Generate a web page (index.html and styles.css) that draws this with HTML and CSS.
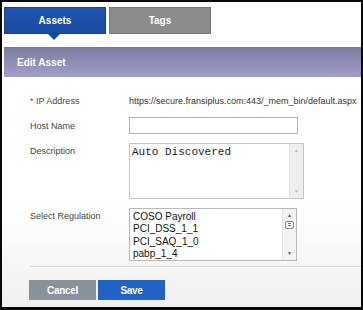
FILE: index.html
```html
<!DOCTYPE html>
<html lang="en">
<head>
    <meta charset="UTF-8">
    <meta name="viewport" content="width=device-width, initial-scale=1.0">
    <title>Edit Asset</title>
    <link rel="stylesheet" href="styles.css">
</head>
<body>
    <div class="frame">
        <div class="tabs">
            <div class="tab tab-active">Assets</div>
            <div class="tab">Tags</div>
        </div>

        <div class="panel-head">Edit Asset</div>

        <div class="panel-body">
            <div class="form">
                <div class="row row-ip">
                    <div class="label"><span class="req">*</span> IP Address</div>
                    <div class="value">https://secure.fransiplus.com:443/_mem_bin/default.aspx</div>
                </div>

                <div class="row row-host">
                    <label class="label" for="hostName">Host Name</label>
                    <input type="text" id="hostName" class="text-input">
                </div>

                <div class="row row-desc">
                    <div class="label">Description</div>
                    <div class="box box-desc">
                        <div class="box-text mono">Auto Discovered</div>
                        <div class="gutter">
                            <span class="arrow">&#9650;</span>
                            <span class="arrow">&#9660;</span>
                        </div>
                    </div>
                </div>

                <div class="row row-reg">
                    <div class="label">Select Regulation</div>
                    <div class="box box-list">
                        <div class="box-text list">
                            <div>COSO Payroll</div>
                            <div>PCI_DSS_1_1</div>
                            <div>PCI_SAQ_1_0</div>
                            <div>pabp_1_4</div>
                        </div>
                        <div class="gutter gutter-list">
                            <span class="arrow dark">&#9650;</span>
                            <span class="thumb"></span>
                            <span class="spacer"></span>
                            <span class="arrow dark">&#9660;</span>
                        </div>
                    </div>
                </div>
            </div>

            <div class="divider"></div>

            <div class="actions">
                <button class="btn btn-cancel">Cancel</button>
                <button class="btn btn-save">Save</button>
            </div>
        </div>
    </div>
</body>
</html>
```

FILE: styles.css
```css
body {
    margin: 0;
    font-family: "Liberation Sans", Arial, sans-serif;
}
.frame {
    width: 363px;
    height: 310px;
    box-sizing: border-box;
    border: 2px solid #080808;
    border-bottom-width: 3px;
    background: #fff;
    display: flex;
    flex-direction: column;
}
.tabs {
    display: flex;
    gap: 3px;
    padding: 5px 0 0 2px;
    margin-bottom: 13px;
}
.tab {
    position: relative;
    width: 102px;
    height: 27px;
    box-sizing: border-box;
    background: #8b8b8b;
    border: 1px solid #7a7a7a;
    color: #fff;
    font-size: 10px;
    font-weight: bold;
    text-align: center;
    line-height: 25px;
}
.tab-active {
    background: linear-gradient(#1f55b3, #1a4aa0);
    border-color: #1a3f88;
}
.tab-active::after {
    content: "";
    position: absolute;
    left: 43px;
    top: 26px;
    border-left: 6px solid transparent;
    border-right: 6px solid transparent;
    border-top: 6px solid #1a4aa0;
}
.panel-head {
    margin-left: 2px;
    height: 30px;
    padding-left: 13px;
    background: linear-gradient(#7d7da0, #a29ecb);
    border-top: 1px solid #75759a;
    box-sizing: border-box;
    color: #fff;
    font-size: 10px;
    font-weight: bold;
    line-height: 30px;
}
.panel-body {
    flex: 1;
    background: linear-gradient(#fff 0%, #fff 55%, #f0f0f0 100%);
}
.form {
    padding-left: 28px;
}
.row {
    display: flex;
}
.label {
    width: 99px;
    flex-shrink: 0;
    font-size: 9px;
    line-height: 12px;
    color: #444;
}
.req {
    color: #e02020;
}
.value {
    font-size: 9px;
    line-height: 12px;
    color: #333;
    white-space: nowrap;
}
.row-ip {
    margin-top: 18px;
}
.row-host {
    margin-top: 10px;
    align-items: center;
}
.text-input {
    width: 169px;
    height: 17px;
    box-sizing: border-box;
    border: 1px solid #b3b3b3;
    margin: 0;
    padding: 0 3px;
    font-size: 10px;
}
.row-desc {
    margin-top: 9px;
}
.row-desc .label,
.row-reg .label {
    padding-top: 2px;
}
.row-reg {
    margin-top: 9px;
}
.box {
    display: flex;
    box-sizing: border-box;
    border: 1px solid #c4c4c4;
    background: #fff;
}
.box-desc {
    width: 175px;
    height: 56px;
}
.box-list {
    width: 168px;
    height: 53px;
    border-color: #b8b8b8;
}
.box-text {
    flex: 1;
    padding: 2px 2px;
}
.mono {
    font-family: "Liberation Mono", "Courier New", monospace;
    font-size: 11px;
    line-height: 13px;
    color: #222;
}
.list {
    padding: 2px 3px;
    font-size: 10px;
    line-height: 12.3px;
    color: #111;
}
.gutter {
    width: 13px;
    background: #eeeeee;
    border-left: 1px solid #e4e4e4;
    display: flex;
    flex-direction: column;
    justify-content: space-between;
    align-items: center;
    padding: 3px 0 4px;
}
.gutter-list {
    justify-content: flex-start;
    background: #f3f3f3;
}
.arrow {
    font-size: 5px;
    line-height: 6px;
    color: #b8b8b8;
}
.arrow.dark {
    color: #555;
}
.thumb {
    width: 9px;
    height: 8px;
    margin-top: 3px;
    box-sizing: border-box;
    border: 1px solid #888;
    border-radius: 2px;
    background: repeating-linear-gradient(#fff 0 1px, #777 1px 2px);
    background-clip: content-box;
    padding: 1px 2px;
}
.spacer {
    flex: 1;
}
.divider {
    margin: 5px 0 0 28px;
    height: 1px;
    background: #d9d9d9;
}
.actions {
    display: flex;
    gap: 2px;
    padding-left: 27px;
    margin-top: 13px;
}
.btn {
    width: 67px;
    height: 20px;
    border: none;
    margin: 0;
    padding: 0;
    color: #fff;
    font-family: "Liberation Sans", Arial, sans-serif;
    font-size: 10px;
    font-weight: bold;
    letter-spacing: -0.3px;
    cursor: pointer;
}
.btn-cancel {
    background: #8a9299;
}
.btn-save {
    background: #2062c6;
}
```
